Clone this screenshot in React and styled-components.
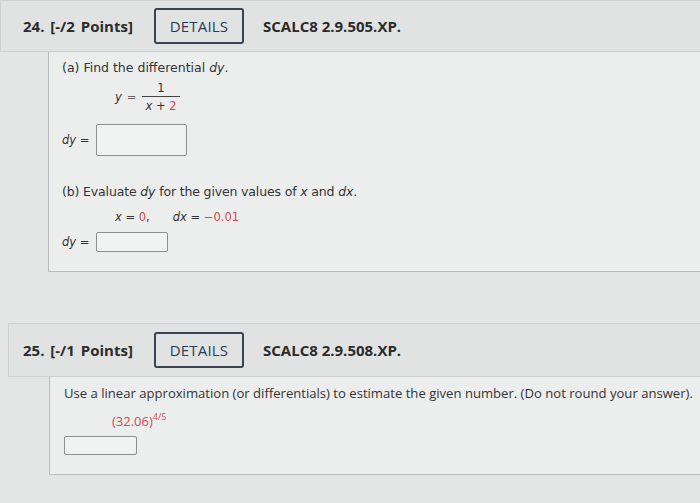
import React from "react";
import styled, { createGlobalStyle } from "styled-components";

const GlobalStyle = createGlobalStyle`
  html, body {
    margin: 0;
    padding: 0;
    background: #e4e6e6;
  }
  body {
    width: 700px;
    height: 503px;
    overflow: hidden;
    font-family: "Open Sans", "DejaVu Sans", sans-serif;
  }
`;

function Question({ number, points, code, indent, headerHeight, bodyHeight, children }) {
  return (
    <Section $indent={indent}>
      <Header $pad={22 - indent} $h={headerHeight}>
        <Title>
          {number}. [-/{points} Points]
        </Title>
        <DetailsButton>DETAILS</DetailsButton>
        <Code>{code}</Code>
      </Header>
      <Body
        $left={48 - indent + (indent ? 1 : 0)}
        $pad={indent ? 14 : 13}
        $h={bodyHeight}
      >
        {children}
      </Body>
    </Section>
  );
}

export default function App() {
  return (
    <>
      <GlobalStyle />
      <Page>
        <Question
          number="24"
          points="2"
          code="SCALC8 2.9.505.XP."
          indent={0}
          headerHeight={52}
          bodyHeight={220}
        >
          <Prompt $top={7}>
            (a) Find the differential <Var>dy</Var>.
          </Prompt>
          <Equation>
            <Var>y</Var>
            <Eq>=</Eq>
            <Fraction>
              <Num>1</Num>
              <Den>
                <Var>x</Var> + <Red>2</Red>
              </Den>
            </Fraction>
          </Equation>
          <AnswerRow $top={10}>
            <Label>
              <Var>dy</Var> =
            </Label>
            <AnswerBox $w={91} $h={32} />
          </AnswerRow>
          <Prompt $top={27} $spacing={-0.15}>
            (b) Evaluate <Var>dy</Var> for the given values of <Var>x</Var> and{" "}
            <Var>dx</Var>.
          </Prompt>
          <Values>
            <span>
              <Var>x</Var> = <Red>0</Red>,
            </span>
            <span>
              <Var>dx</Var> = <Red>−0.01</Red>
            </span>
          </Values>
          <AnswerRow $top={6}>
            <Label>
              <Var>dy</Var> =
            </Label>
            <AnswerBox $w={72} $h={20} />
          </AnswerRow>
        </Question>

        <Spacer />

        <Question
          number="25"
          points="1"
          code="SCALC8 2.9.508.XP."
          indent={8}
          headerHeight={54}
          bodyHeight={98}
        >
          <WideText>
            Use a linear approximation (or differentials) to estimate the given
            number. (Do not round your answer).
          </WideText>
          <Expr>
            <Red>(32.06)</Red>
            <Sup>4/5</Sup>
          </Expr>
          <AnswerBox $w={73} $h={19} $top={6} />
        </Question>
      </Page>
    </>
  );
}

const Page = styled.div`
  display: flex;
  flex-direction: column;
  width: 700px;
  height: 503px;
`;

const Section = styled.section`
  display: flex;
  flex-direction: column;
  margin-left: ${({ $indent }) => $indent}px;
`;

const Header = styled.div`
  display: flex;
  align-items: center;
  height: ${({ $h }) => $h}px;
  padding-left: ${({ $pad }) => $pad}px;
  background: #e1e3e3;
  border: 1px solid #cfd1d1;
  border-right: none;
  box-sizing: border-box;
`;

const Title = styled.div`
  font-size: 15px;
  font-weight: 700;
  color: #2b2b2b;
  width: 131px;
  word-spacing: 2px;
`;

const DetailsButton = styled.div`
  display: flex;
  align-items: center;
  justify-content: center;
  width: 90px;
  height: 36px;
  box-sizing: border-box;
  border: 2px solid #3c4454;
  border-radius: 3px;
  font-size: 15px;
  color: #2c3a56;
  letter-spacing: 0.2px;
`;

const Code = styled.div`
  margin-left: 19px;
  font-size: 15px;
  font-weight: 700;
  color: #2b2b2b;
`;

const Body = styled.div`
  display: flex;
  flex-direction: column;
  align-items: flex-start;
  margin-left: ${({ $left }) => $left}px;
  padding-left: ${({ $pad }) => $pad}px;
  background: #eceeee;
  border-left: 1px solid #b9bcbc;
  border-bottom: 1px solid #b9bcbc;
  height: ${({ $h }) => $h}px;
  box-sizing: border-box;
  font-family: "DejaVu Sans", "Open Sans", sans-serif;
  font-size: 12.5px;
  color: #333;
`;

const Prompt = styled.div`
  margin-top: ${({ $top }) => $top}px;
  line-height: 18px;
  letter-spacing: ${({ $spacing }) => $spacing || 0}px;
`;

const Var = styled.i`
  font-style: italic;
`;

const Red = styled.span`
  color: #cf4a50;
`;

const Equation = styled.div`
  display: flex;
  align-items: center;
  margin-top: 3px;
  margin-left: 53px;
  font-size: 11.5px;
`;

const Eq = styled.span`
  margin: 0 6px 0 5px;
  color: #666;
`;

const Fraction = styled.span`
  display: inline-flex;
  flex-direction: column;
  align-items: stretch;
  text-align: center;
`;

const Num = styled.span`
  line-height: 16px;
`;

const Den = styled.span`
  border-top: 1px solid #444;
  padding: 1px 3px 0 3px;
  line-height: 16px;
`;

const AnswerRow = styled.div`
  display: flex;
  align-items: center;
  gap: 7px;
  margin-top: ${({ $top }) => $top}px;
  font-size: 11.5px;
`;

const Label = styled.span`
  width: 27px;
  white-space: nowrap;
`;

const AnswerBox = styled.div`
  width: ${({ $w }) => $w}px;
  height: ${({ $h }) => $h}px;
  margin-top: ${({ $top }) => $top || 0}px;
  box-sizing: border-box;
  background: #f1f3f3;
  border: 1px solid #8e9090;
  border-radius: 2px;
`;

const Values = styled.div`
  display: flex;
  gap: 23px;
  margin-top: 7px;
  margin-left: 53px;
  line-height: 18px;
  font-size: 11.5px;
`;

const Spacer = styled.div`
  height: 51px;
`;

const WideText = styled.div`
  margin-top: 7px;
  line-height: 18px;
  font-family: "Open Sans", sans-serif;
  font-size: 13.1px;
  white-space: nowrap;
`;

const Expr = styled.div`
  margin-top: 10px;
  margin-left: 48px;
  line-height: 18px;
  font-family: "Open Sans", sans-serif;
  font-size: 13px;
`;

const Sup = styled.sup`
  color: #cf4a50;
  font-size: 9px;
  vertical-align: 6px;
  line-height: 0;
`;
